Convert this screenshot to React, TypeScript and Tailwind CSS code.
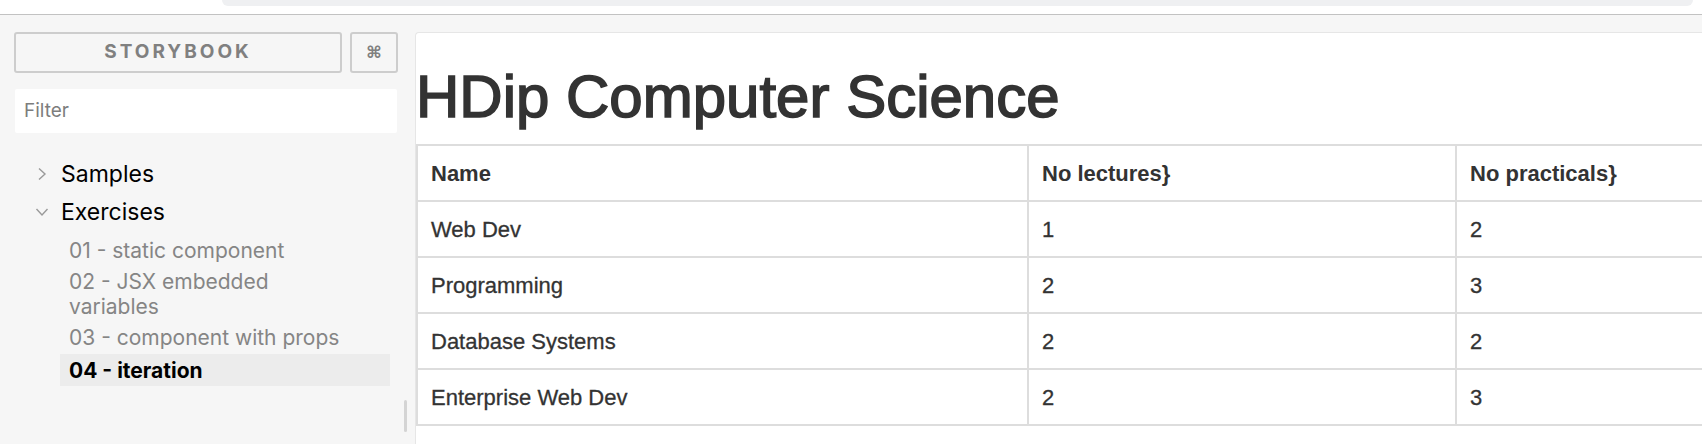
import React from "react";

const rows = [
  { name: "Web Dev", lec: "1", prac: "2" },
  { name: "Programming", lec: "2", prac: "3" },
  { name: "Database Systems", lec: "2", prac: "2" },
  { name: "Enterprise Web Dev", lec: "2", prac: "3" },
];

function ChevronRightIcon() {
  return (
    <svg width="10" height="14" viewBox="0 0 10 14" fill="none">
      <polyline points="2,1.5 8,7 2,12.5" stroke="#9a9a9a" strokeWidth="1.4" fill="none" />
    </svg>
  );
}

function ChevronDownIcon() {
  return (
    <svg width="14" height="10" viewBox="0 0 14 10" fill="none">
      <polyline points="1.5,2 7,8 12.5,2" stroke="#9a9a9a" strokeWidth="1.4" fill="none" />
    </svg>
  );
}

export default function App() {
  const side = { fontFamily: "Inter, 'Liberation Sans', sans-serif" };
  const main = { fontFamily: "'Liberation Sans', Arial, sans-serif" };
  return (
    <div className="relative w-[1702px] h-[444px] overflow-hidden bg-[#f6f6f6]">
      {/* top browser strip */}
      <div className="h-[15px] bg-white border-b border-[#c2c2c2] flex pl-[222px] pr-[9px]">
        <div className="flex-1 h-[6px] bg-[#eff0f2] rounded-b-[10px]" />
      </div>
      <div className="flex">
        {/* sidebar */}
        <div className="w-[415px] shrink-0 pl-[14px] pt-[17px]" style={side}>
          <div className="flex gap-[8px]">
            <div className="w-[328px] h-[41px] border-2 border-[#cdcdcd] rounded-[3px] flex items-center justify-center text-[19px] font-bold tracking-[3px] text-[#808080]">
              STORYBOOK
            </div>
            <div className="w-[48px] h-[41px] border-2 border-[#cdcdcd] rounded-[3px] flex items-center justify-center text-[17px] font-bold text-[#808080]">
              ⌘
            </div>
          </div>
          <div className="mt-[16px] ml-[1px] w-[382px] h-[44px] bg-white rounded-[2px] flex items-center pl-[9px] text-[19px] text-[#7d7d7d]">
            Filter
          </div>
          <div className="mt-[22px]">
            <div className="h-[38px] flex items-center">
              <div className="w-[47px] flex justify-end pr-[14px] pl-[22px]">
                <ChevronRightIcon />
              </div>
              <span className="text-[23px] text-black">Samples</span>
            </div>
            <div className="h-[38px] flex items-center">
              <div className="w-[47px] flex pl-[21px]">
                <ChevronDownIcon />
              </div>
              <span className="text-[23px] text-black">Exercises</span>
            </div>
            <div className="mt-[4px] ml-[46px] w-[330px] text-[21px] leading-[25px] text-[#858585]">
              <div className="py-[3px] pl-[9px]">01 - static component</div>
              <div className="py-[3px] pl-[9px] pr-[80px]">02 - JSX embedded variables</div>
              <div className="py-[3px] pl-[9px]">03 - component with props</div>
              <div className="mt-[1px] h-[32px] flex items-center pl-[9px] bg-[#ececec] font-bold text-black">
                04 - iteration
              </div>
            </div>
          </div>
        </div>
        {/* main panel */}
        <div className="mt-[17px] flex-1 min-w-0 h-[500px] bg-white rounded-tl-[4px] border-l border-t border-[#e6e6e6] overflow-hidden" style={main}>
          <div className="mt-[34px] h-[60px] leading-[60px] text-[60px] text-[#333333] whitespace-nowrap [-webkit-text-stroke:1.6px_#333333]">
            HDip Computer Science
          </div>
          <table className="mt-[17px] border-collapse table-fixed w-[1500px] text-[22px] text-[#333333]">
            <colgroup>
              <col className="w-[611px]" />
              <col className="w-[428px]" />
              <col className="w-[461px]" />
            </colgroup>
            <thead>
              <tr className="h-[56px]">
                <th className="border-2 border-[#dddddd] text-left font-bold pl-[13px]">Name</th>
                <th className="border-2 border-[#dddddd] text-left font-bold pl-[13px]">No lectures&#125;</th>
                <th className="border-2 border-[#dddddd] text-left font-bold pl-[13px]">No practicals&#125;</th>
              </tr>
            </thead>
            <tbody className="[-webkit-text-stroke:0.3px_#333333]">
              {rows.map((r) => (
                <tr key={r.name} className="h-[56px]">
                  <td className="border-2 border-[#dddddd] pl-[13px]">{r.name}</td>
                  <td className="border-2 border-[#dddddd] pl-[13px]">{r.lec}</td>
                  <td className="border-2 border-[#dddddd] pl-[13px]">{r.prac}</td>
                </tr>
              ))}
            </tbody>
          </table>
        </div>
      </div>
      {/* sidebar resize / scroll handle */}
      <div className="absolute left-[404px] top-[400px] w-[3px] h-[32px] bg-[#d4d4d4] rounded-full" />
    </div>
  );
}
